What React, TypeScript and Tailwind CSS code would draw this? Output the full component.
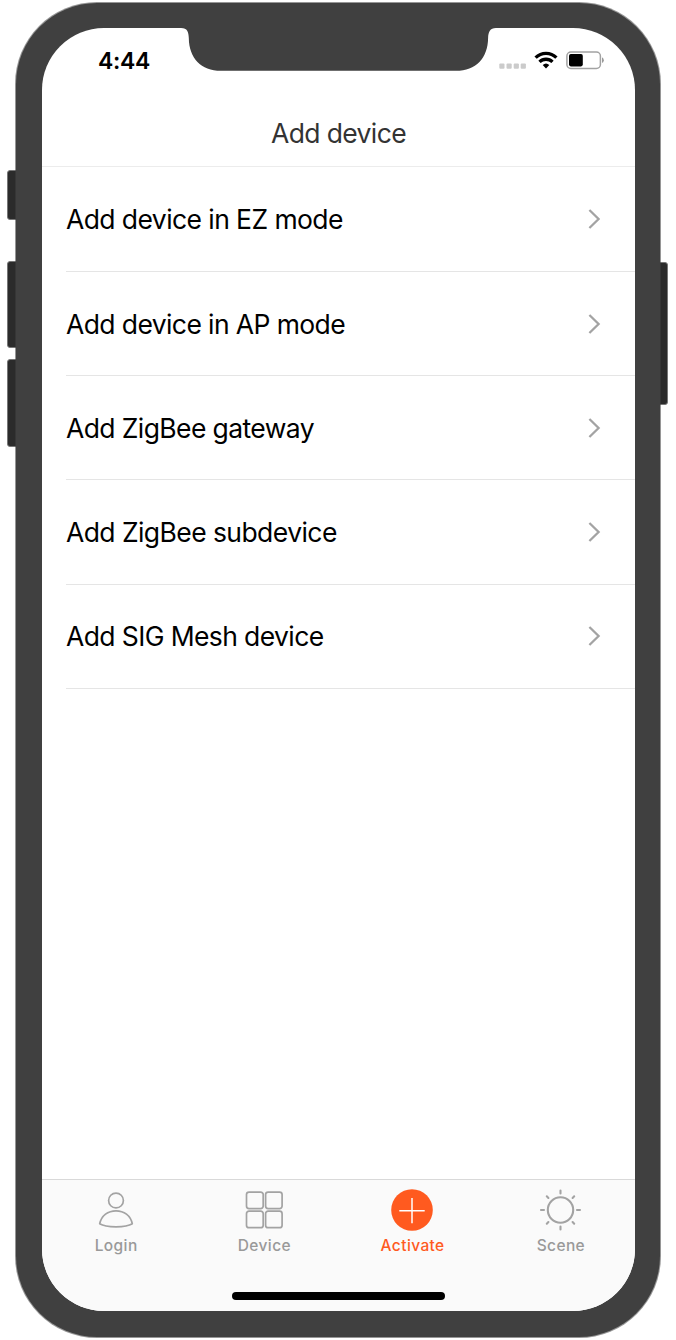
import type { ReactNode } from "react";

const rows = [
  { label: "Add device in EZ mode", tracking: "tracking-[-0.58px]" },
  { label: "Add device in AP mode", tracking: "tracking-[-0.60px]" },
  { label: "Add ZigBee gateway", tracking: "tracking-[-0.60px]" },
  { label: "Add ZigBee subdevice", tracking: "tracking-[-0.57px]" },
  { label: "Add SIG Mesh device", tracking: "tracking-[-0.61px]" },
];

function Chevron() {
  return (
    <svg className="h-[22px] w-[14px]" viewBox="0 0 14 22" fill="none" stroke="#a3a3a3" strokeWidth="2.3">
      <path d="M1.4 2L10.6 11L1.4 20" />
    </svg>
  );
}

function Notch() {
  return (
    <svg className="absolute left-[138px] top-[-1px] h-[45px] w-[318px]" viewBox="0 0 318 45" fill="#404040">
      <path d="M0 0H318V1H316C310 1 308.300 5 308.100 11C307.900 31 296 43.800 276 43.800H41C21 43.800 9 31 8.800 11C8.500 5 7.500 1 1 1H0Z" />
    </svg>
  );
}

function StatusIcons() {
  return (
    <svg className="h-[24px] w-[108px]" viewBox="498 48 108 24">
      <g fill="#cbcbcb">
        <rect x="499.300" y="63.600" width="5.200" height="5.200" rx="1" />
        <rect x="506.500" y="63.600" width="5.200" height="5.200" rx="1" />
        <rect x="513.700" y="63.600" width="5.200" height="5.200" rx="1" />
        <rect x="520.700" y="63.600" width="5.200" height="5.200" rx="1" />
      </g>
      <g fill="none" stroke="#000" strokeWidth="3.3">
        <path d="M535.600 57.600A14.800 14.800 0 0 1 556.400 57.600" />
        <path d="M539.500 61.900A9.300 9.300 0 0 1 552.500 61.900" />
      </g>
      <path d="M542.700 65.100A4.900 4.900 0 0 1 549.300 65.100L546 68.600Z" />
      <rect x="566.900" y="52" width="33.500" height="16.400" rx="4" fill="none" stroke="#a2a2a2" strokeWidth="1.500" />
      <rect x="569" y="54.100" width="13.800" height="12.300" rx="1.800" />
      <path d="M602 57.300Q603.800 58.200 603.800 60.200Q603.800 62.200 602 63.100Z" fill="#999" />
    </svg>
  );
}

function Tab({ label, active, children }: { label: string; active?: boolean; children: ReactNode }) {
  return (
    <div className={`flex flex-1 flex-col items-center ${active ? "text-[#ff5a1f]" : "text-[#999999]"}`}>
      <svg className="mt-[8px] h-[44px] w-[44px]" viewBox="-22 -22 44 44" fill="none" stroke="#a3a3a3" strokeWidth="1.700">
        {children}
      </svg>
      <span className="mt-[4px] text-[15.5px] font-medium leading-[20px] tracking-[0.4px]">{label}</span>
    </div>
  );
}

function Tabs() {
  return (
    <nav className="flex h-[132px] shrink-0 flex-col border-t border-[#d9d9d9] bg-[#fafafa]">
      <div className="flex">
        <Tab label="Login">
          <circle cx="0" cy="-9.500" r="7.400" />
          <path d="M-16.300 13.800C-14.500 5.500 -8 .800 0 .800S14.500 5.500 16.300 13.800C10 17.800 -10 17.800 -16.300 13.800Z" strokeLinejoin="round" />
        </Tab>
        <Tab label="Device">
          <rect x="-17.500" y="-17.900" width="16.700" height="16.500" rx="2.500" />
          <rect x="1.600" y="-17.900" width="16.500" height="16.500" rx="2.500" />
          <rect x="-17.500" y="1.200" width="16.700" height="16.500" rx="2.500" />
          <rect x="1.600" y="1.200" width="16.500" height="16.500" rx="2.500" />
        </Tab>
        <Tab label="Activate" active>
          <circle cx="-1" cy="0" r="20.800" fill="#ff5a1f" stroke="none" />
          <path d="M-13.700 .800H11.700M-1 -12V13.300" stroke="#fff" strokeWidth="1.500" />
        </Tab>
        <Tab label="Scene">
          <g transform="translate(-1 0)">
            <circle cx="0.500" cy="0" r="12.700" strokeWidth="2.100" />
            <path
              d="M.5 -19.500V-16.500M.5 16.500V19.500M-19 0H-16M17 0H20M-13.200 -13.700L-11.600 -12.100M14.200 -13.700L12.600 -12.100M-13.200 13.700L-11.600 12.100M14.200 13.700L12.600 12.100"
              strokeWidth="2.100"
              strokeLinecap="round"
            />
          </g>
        </Tab>
      </div>
      <div className="ml-[190px] mt-[36px] h-[8px] w-[213px] rounded-full bg-black" />
    </nav>
  );
}

export default function App() {
  return (
    <div className="relative h-[1340px] w-[676px] overflow-hidden bg-white px-[16px] pt-[3px] font-['Inter',sans-serif]">
      <div className="absolute left-[7px] top-[170px] h-[50px] w-[14px] rounded-[3px] border border-[#777] bg-[#2b2b2b]" />
      <div className="absolute left-[7px] top-[261px] h-[87px] w-[14px] rounded-[3px] border border-[#777] bg-[#2b2b2b]" />
      <div className="absolute left-[7px] top-[359px] h-[88px] w-[14px] rounded-[3px] border border-[#777] bg-[#2b2b2b]" />
      <div className="absolute left-[655px] top-[262px] h-[143px] w-[13px] rounded-[3px] border border-[#777] bg-[#2b2b2b]" />
      <div className="relative h-[1334px] w-[644px] rounded-[81px] bg-[#404040] pl-[26px] pt-[25px] shadow-[0_0_0_1px_rgba(64,64,64,0.55)]">
        <div className="relative flex h-[1283px] w-[593px] flex-col overflow-hidden rounded-[62px] bg-white">
          <Notch />
          <header className="flex h-[139px] shrink-0 flex-col border-b border-[#ececec]">
            <div className="flex justify-between pl-[56px] pr-[29px] pt-[20px]">
              <span className="text-[23px] font-semibold leading-[26px] tracking-[-0.35px] text-black">4:44</span>
              <StatusIcons />
            </div>
            <h1 className="mt-[43px] text-center text-[26.500px] leading-[32px] tracking-[-0.620px] text-[#333]">Add device</h1>
          </header>
          <main className="flex-1">
            <ul className="pl-[24px] pt-[0.600px]">
              {rows.map((row) => (
                <li key={row.label} className="flex h-[104.300px] items-center justify-between border-b border-[#e5e5e5] pr-[33px]">
                  <span className={`text-[26.500px] leading-[34px] text-black ${row.tracking}`}>{row.label}</span>
                  <Chevron />
                </li>
              ))}
            </ul>
          </main>
          <Tabs />
        </div>
      </div>
    </div>
  );
}
